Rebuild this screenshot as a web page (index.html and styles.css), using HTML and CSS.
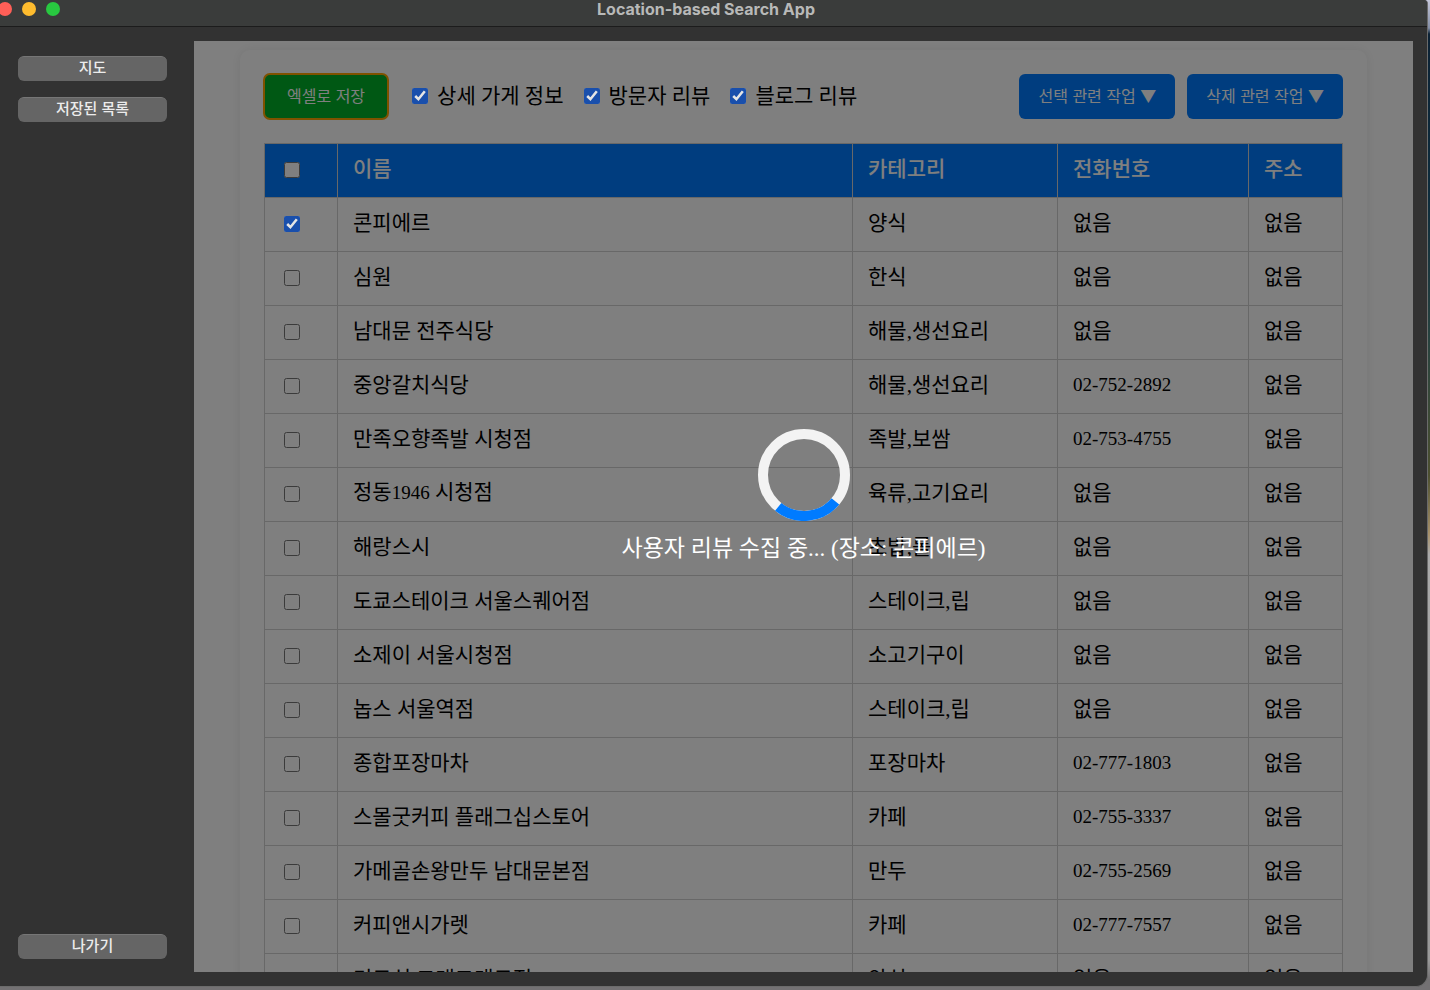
FILE: index.html
```html
<!DOCTYPE html>
<html lang="ko">
<head>
<meta charset="utf-8">
<title>Location-based Search App</title>
<link rel="stylesheet" href="styles.css">
</head>
<body>
<div class="window">
  <header class="titlebar">
    <div class="lights"><span class="light red"></span><span class="light yellow"></span><span class="light green"></span></div>
    <h1 class="title">Location-based Search App</h1>
  </header>
  <div class="body">
    <nav class="sidebar">
      <button class="nav-button" type="button">지도</button>
      <button class="nav-button" type="button">저장된 목록</button>
      <button class="nav-button exit" type="button">나가기</button>
    </nav>
    <main class="view">
      <section class="card">
        <div class="toolbar">
          <button class="action save" type="button">엑셀로 저장</button>
          <div class="options">
            <label class="option"><input class="check" type="checkbox" checked>상세 가게 정보</label>
            <label class="option"><input class="check" type="checkbox" checked>방문자 리뷰</label>
            <label class="option"><input class="check" type="checkbox" checked>블로그 리뷰</label>
          </div>
          <div class="menus">
            <button class="action" type="button">선택 관련 작업 ▼</button>
            <button class="action" type="button">삭제 관련 작업 ▼</button>
          </div>
        </div>
        <table class="places">
          <colgroup><col class="col-check"><col><col class="col-category"><col class="col-phone"><col class="col-address"></colgroup>
          <thead>
            <tr><th><input class="check" type="checkbox" aria-label="전체 선택"></th><th>이름</th><th>카테고리</th><th>전화번호</th><th>주소</th></tr>
          </thead>
          <tbody>
            <tr><td><input class="check" type="checkbox" aria-label="콘피에르" checked></td><td>콘피에르</td><td>양식</td><td>없음</td><td>없음</td></tr>
            <tr><td><input class="check" type="checkbox" aria-label="심원"></td><td>심원</td><td>한식</td><td>없음</td><td>없음</td></tr>
            <tr><td><input class="check" type="checkbox" aria-label="남대문 전주식당"></td><td>남대문 전주식당</td><td>해물,생선요리</td><td>없음</td><td>없음</td></tr>
            <tr><td><input class="check" type="checkbox" aria-label="중앙갈치식당"></td><td>중앙갈치식당</td><td>해물,생선요리</td><td><span class="num">02-752-2892</span></td><td>없음</td></tr>
            <tr><td><input class="check" type="checkbox" aria-label="만족오향족발 시청점"></td><td>만족오향족발 시청점</td><td>족발,보쌈</td><td><span class="num">02-753-4755</span></td><td>없음</td></tr>
            <tr><td><input class="check" type="checkbox" aria-label="정동1946 시청점"></td><td>정동<span class="num">1946</span> 시청점</td><td>육류,고기요리</td><td>없음</td><td>없음</td></tr>
            <tr><td><input class="check" type="checkbox" aria-label="해랑스시"></td><td>해랑스시</td><td>초밥,롤</td><td>없음</td><td>없음</td></tr>
            <tr><td><input class="check" type="checkbox" aria-label="도쿄스테이크 서울스퀘어점"></td><td>도쿄스테이크 서울스퀘어점</td><td>스테이크,립</td><td>없음</td><td>없음</td></tr>
            <tr><td><input class="check" type="checkbox" aria-label="소제이 서울시청점"></td><td>소제이 서울시청점</td><td>소고기구이</td><td>없음</td><td>없음</td></tr>
            <tr><td><input class="check" type="checkbox" aria-label="놉스 서울역점"></td><td>놉스 서울역점</td><td>스테이크,립</td><td>없음</td><td>없음</td></tr>
            <tr><td><input class="check" type="checkbox" aria-label="종합포장마차"></td><td>종합포장마차</td><td>포장마차</td><td><span class="num">02-777-1803</span></td><td>없음</td></tr>
            <tr><td><input class="check" type="checkbox" aria-label="스몰굿커피 플래그십스토어"></td><td>스몰굿커피 플래그십스토어</td><td>카페</td><td><span class="num">02-755-3337</span></td><td>없음</td></tr>
            <tr><td><input class="check" type="checkbox" aria-label="가메골손왕만두 남대문본점"></td><td>가메골손왕만두 남대문본점</td><td>만두</td><td><span class="num">02-755-2569</span></td><td>없음</td></tr>
            <tr><td><input class="check" type="checkbox" aria-label="커피앤시가렛"></td><td>커피앤시가렛</td><td>카페</td><td><span class="num">02-777-7557</span></td><td>없음</td></tr>
            <tr><td><input class="check" type="checkbox" aria-label="미묘식 그래그대묘점"></td><td>미묘식 그래그대묘점</td><td>양식</td><td>없음</td><td>없음</td></tr>
          </tbody>
        </table>
      </section>
      <div class="overlay" role="status">
        <svg class="spinner" viewBox="0 0 92 92" aria-hidden="true">
          <circle cx="46" cy="46" r="41" fill="none" stroke="#f3f3f3" stroke-width="10"/>
          <path d="M77.4 72.4A41 41 0 0 1 20.2 77.9" fill="none" stroke="#007bff" stroke-width="10"/>
        </svg>
        <p class="message">사용자 리뷰 수집 중... (장소: 콘피에르)</p>
      </div>
    </main>
  </div>
</div>
</body>
</html>
```
FILE: styles.css
```css
* { box-sizing: border-box; }

body {
  margin: 0;
  height: 100vh;
  padding: 0 2px 3px 0;
  overflow: hidden;
  background: linear-gradient(#c3c5d8 0, #8590a8 28px, #0c2235 34px, #0d2c3c 20%, #27423f 34%, #4d5030 48%, #a8926c 54%, #aaa 56%, #999 97%, #737173 99%);
}

.window {
  display: flex;
  flex-direction: column;
  height: 100%;
  overflow: hidden;
  border: solid #6b6b6b;
  border-width: 0 1px 1px 0;
  border-radius: 0 4px 12px 0;
  background: #323232;
}

.titlebar {
  display: flex;
  align-items: center;
  flex: none;
  height: 27px;
  padding: 0 13px 8px 0;
  border-bottom: 1px solid #1c1c1c;
  background: #3a3c3b;
}

.lights { display: flex; gap: 10px; width: 0; margin-left: -2px; }
.light { flex: none; width: 14px; height: 14px; border-radius: 50%; }
.red { background: #ff5f57; }
.yellow { background: #febc2e; }
.green { background: #28c840; }

.title {
  flex: 1;
  margin: 0;
  color: #b8b9b8;
  font: 700 16px/18px Inter, sans-serif;
  text-align: center;
}

.body {
  display: flex;
  flex: 1;
  min-height: 0;
  padding: 14px 14px 14px 0;
}

.sidebar {
  display: flex;
  flex: none;
  flex-direction: column;
  gap: 16px;
  width: 194px;
  padding: 15px 27px 13px 18px;
}

.nav-button {
  height: 25px;
  padding: 0 0 5px;
  border: 0;
  border-top: 1px solid #767676;
  border-radius: 6px;
  background: #656565;
  color: #ececec;
  font: 500 15px/20px "Noto Sans CJK KR", sans-serif;
}
.exit { margin-top: auto; }

.view {
  position: relative;
  flex: 1;
  min-width: 0;
  padding: 9px 46px 0;
  overflow: hidden;
  background: #fff;
  color: #000;
  font: 21px/24px "Liberation Serif", "Noto Sans CJK KR", serif;
}

.card {
  padding: 24px;
  border-radius: 10px;
  background: #fff;
  box-shadow: 0 0 12px rgba(0, 0, 0, 0.08);
}

.toolbar {
  display: flex;
  align-items: center;
  margin-bottom: 24px;
}

.action {
  height: 45px;
  padding: 0 19px 4px;
  border: 0;
  border-radius: 6px;
  background: #007bff;
  color: #fff;
  font: 16px/20px "Noto Sans CJK KR", sans-serif;
}

.save {
  padding: 0 23px 4px;
  background: #00b028;
  outline: 2px solid #ffa500;
  outline-offset: -1px;
}

.options { display: flex; gap: 20px; margin-left: 24px; }
.option { display: flex; align-items: center; gap: 9px; padding-bottom: 2px; }
.menus { display: flex; gap: 12px; margin-left: auto; }

.check {
  display: block;
  width: 16px;
  height: 16px;
  margin: 0;
  accent-color: #0044b8;
}
.check:checked {
  position: relative;
  z-index: 1;
  opacity: 0.8;
}

.places {
  width: 100%;
  border-collapse: collapse;
  table-layout: fixed;
}
.col-check { width: 73px; }
.col-category { width: 205px; }
.col-phone { width: 191px; }
.col-address { width: 94px; }

.places th,
.places td {
  height: 54px;
  padding: 0 15px 4px;
  border: 1px solid #d0d0d0;
  font-weight: 400;
  text-align: left;
}
.places th { background: #007bff; color: #fff; font-weight: 500; }
.places .check { margin: 3px 0 0 4px; }

.num { font-size: 19px; }

.overlay {
  position: absolute;
  inset: 0;
  display: flex;
  flex-direction: column;
  align-items: center;
  justify-content: center;
  padding-bottom: 20px;
  background: rgba(0, 0, 0, 0.5);
}

.spinner { width: 92px; height: 92px; }

.message {
  margin: 12px 0 0;
  color: #fff;
  font-size: 23px;
  line-height: 32px;
}
```
